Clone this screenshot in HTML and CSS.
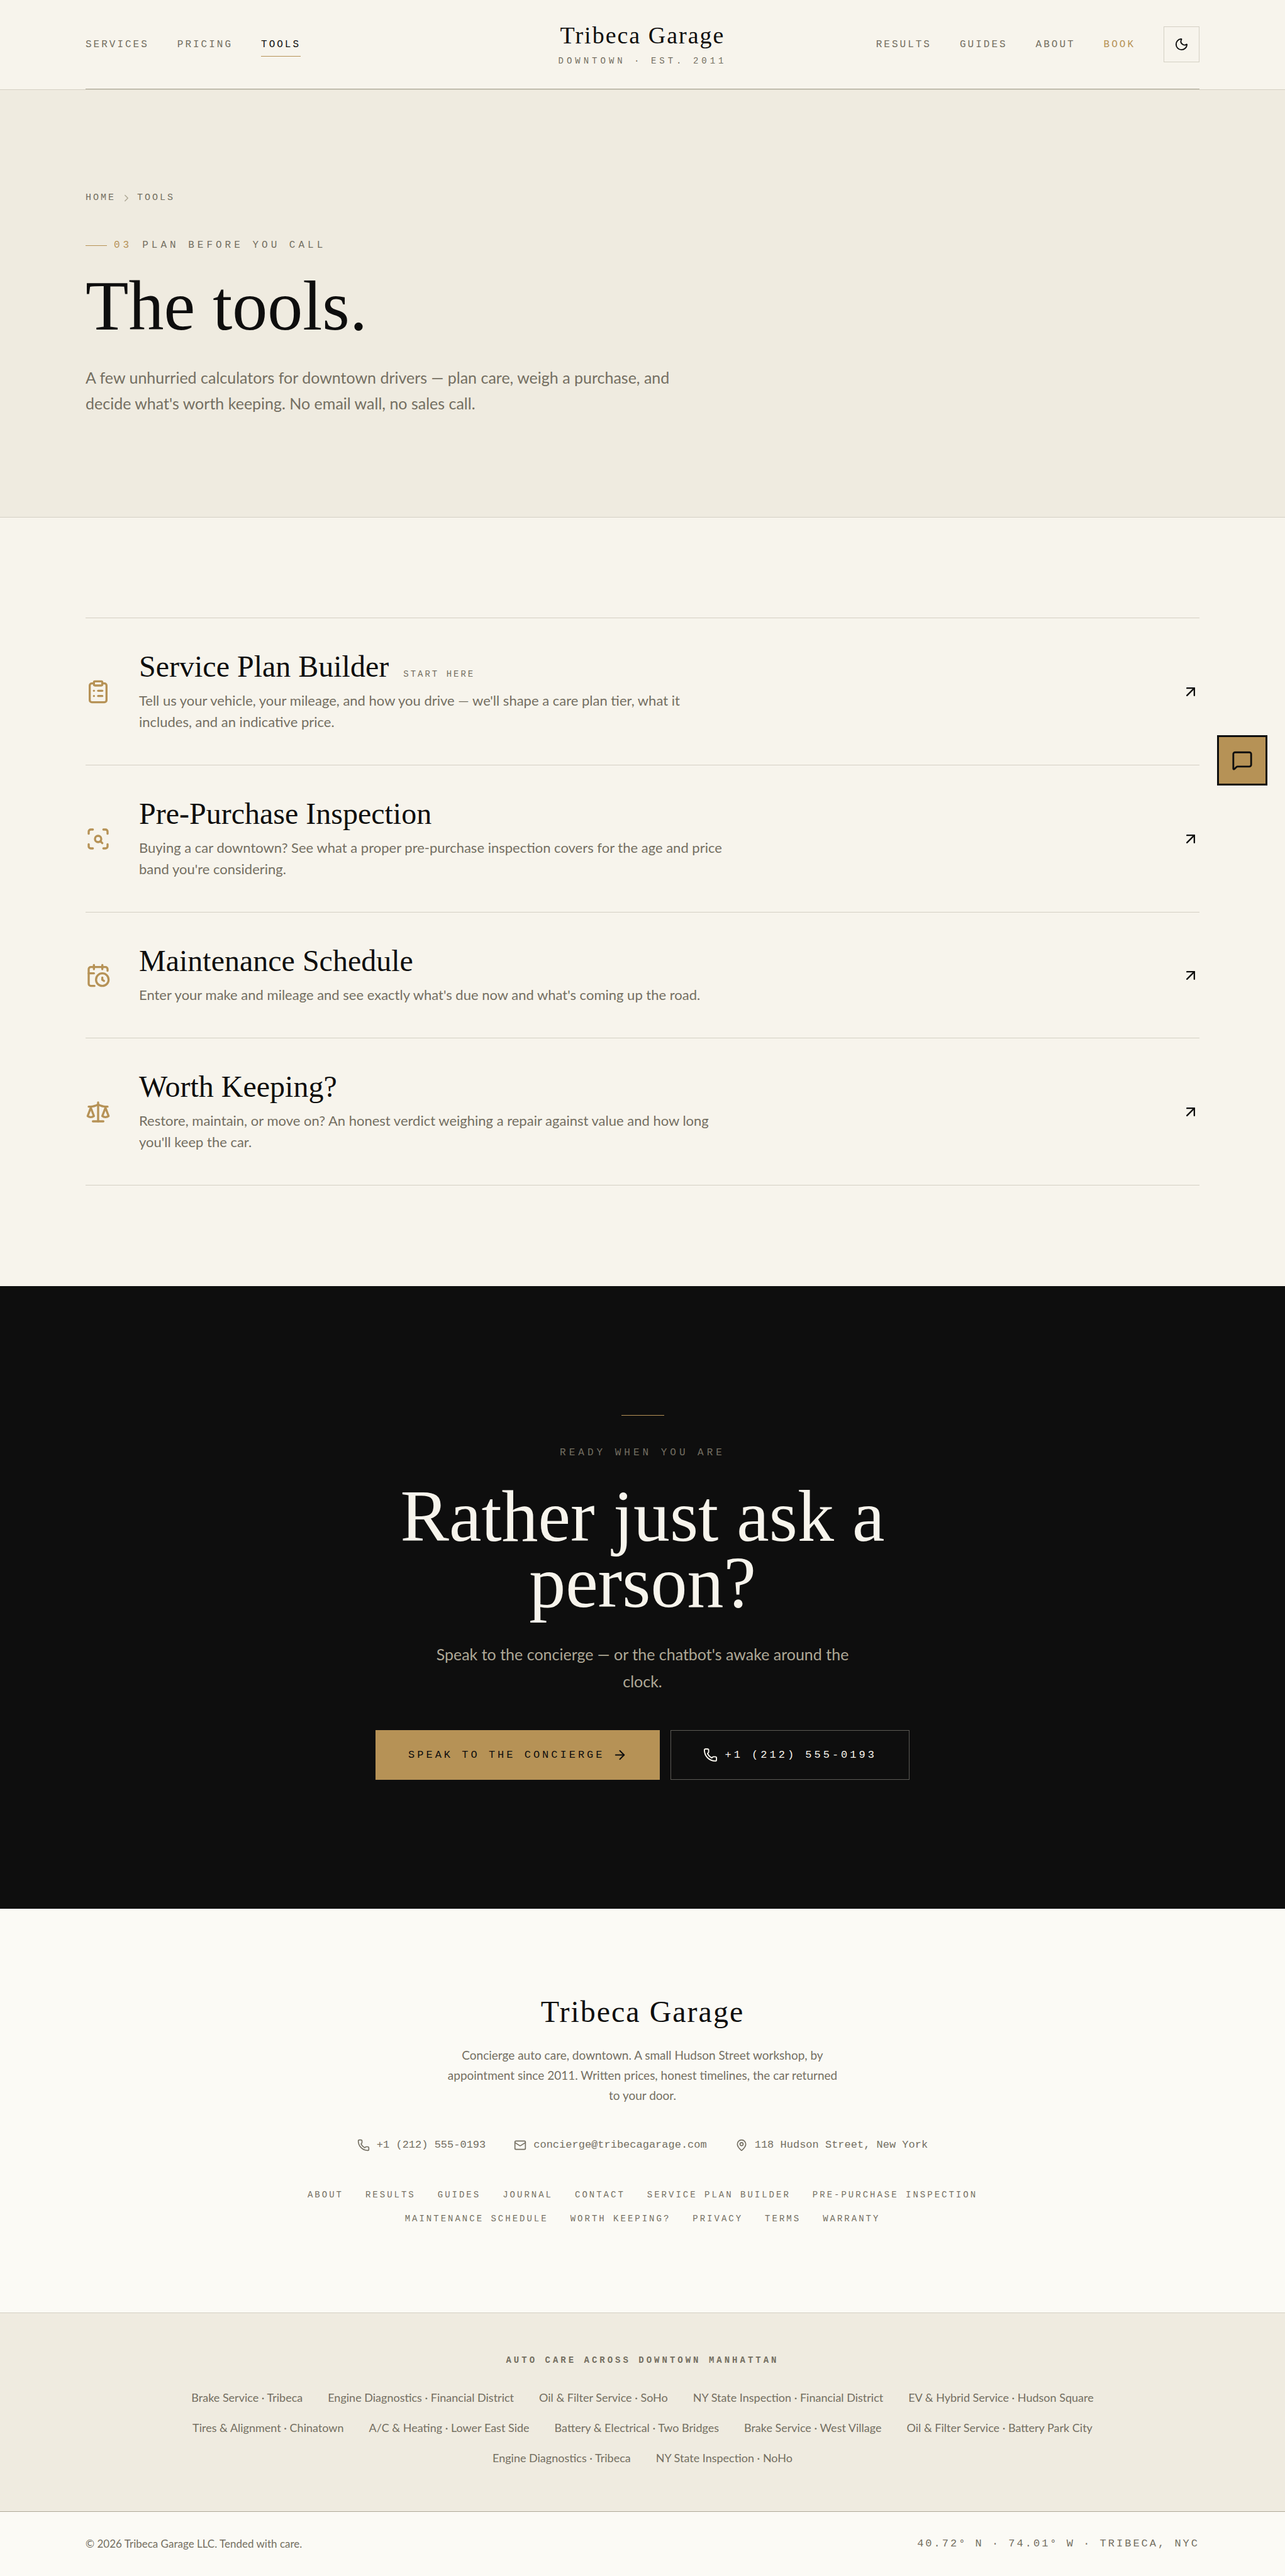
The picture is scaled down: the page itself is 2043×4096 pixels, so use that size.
FILE: index.html
```html
<!DOCTYPE html>
<html lang="en">
<head>
  <meta charset="UTF-8" />
  <meta name="viewport" content="width=device-width, initial-scale=1.0" />
  <title>Tools | Tribeca Garage</title>
  <link rel="stylesheet" href="styles.css">
</head>
<body>
  <header class="site-header">
    <div class="header-inner">
      <nav class="nav" aria-label="Main">
        <a href="#services">SERVICES</a>
        <a href="#pricing">PRICING</a>
        <a href="#tools" class="active">TOOLS</a>
      </nav>
      <a href="#home" class="logo">
        <span class="logo-name">Tribeca Garage</span>
        <span class="logo-tag">DOWNTOWN · EST. 2011</span>
      </a>
      <nav class="nav nav-right" aria-label="Secondary">
        <a href="#results">RESULTS</a>
        <a href="#guides">GUIDES</a>
        <a href="#about">ABOUT</a>
        <a href="#book" class="book">BOOK</a>
        <button type="button" class="theme-toggle" aria-label="Switch theme">
          <svg class="icon" viewBox="0 0 24 24"><path d="M20.985 12.486a9 9 0 1 1-9.473-9.472c.405-.022.617.46.402.803a6 6 0 0 0 8.268 8.268c.344-.215.825-.004.803.401"/></svg>
        </button>
      </nav>
    </div>
  </header>

  <main>
    <section class="hero">
      <nav class="breadcrumb" aria-label="Breadcrumb">
        <a href="#home">HOME</a>
        <svg class="icon" viewBox="0 0 24 24"><path d="m9 18 6-6-6-6"/></svg>
        <span>TOOLS</span>
      </nav>
      <p class="eyebrow">
        <span class="eyebrow-num">03</span>
        <span class="eyebrow-text">PLAN BEFORE YOU CALL</span>
      </p>
      <h1>The tools.</h1>
      <p class="lede">A few unhurried calculators for downtown drivers — plan care, weigh a purchase, and decide what's worth keeping. No email wall, no sales call.</p>
    </section>

    <section class="tools">
      <ul class="tool-list">
        <li>
          <a href="#plan" class="tool">
            <svg class="icon tool-icon" viewBox="0 0 24 24"><rect width="8" height="4" x="8" y="2" rx="1" ry="1"/><path d="M16 4h2a2 2 0 0 1 2 2v14a2 2 0 0 1-2 2H6a2 2 0 0 1-2-2V6a2 2 0 0 1 2-2h2"/><path d="M12 11h4"/><path d="M12 16h4"/><path d="M8 11h.01"/><path d="M8 16h.01"/></svg>
            <div class="tool-body">
              <h2>Service Plan Builder <span class="tool-tag">START HERE</span></h2>
              <p>Tell us your vehicle, your mileage, and how you drive — we'll shape a care plan tier, what it includes, and an indicative price.</p>
            </div>
            <svg class="icon tool-arrow" viewBox="0 0 24 24"><path d="M7 7h10v10"/><path d="M7 17 17 7"/></svg>
          </a>
        </li>
        <li>
          <a href="#inspection" class="tool">
            <svg class="icon tool-icon" viewBox="0 0 24 24"><path d="M3 7V5a2 2 0 0 1 2-2h2"/><path d="M17 3h2a2 2 0 0 1 2 2v2"/><path d="M21 17v2a2 2 0 0 1-2 2h-2"/><path d="M7 21H5a2 2 0 0 1-2-2v-2"/><circle cx="12" cy="12" r="3"/><path d="m16 16-1.9-1.9"/></svg>
            <div class="tool-body">
              <h2>Pre-Purchase Inspection</h2>
              <p>Buying a car downtown? See what a proper pre-purchase inspection covers for the age and price band you're considering.</p>
            </div>
            <svg class="icon tool-arrow" viewBox="0 0 24 24"><path d="M7 7h10v10"/><path d="M7 17 17 7"/></svg>
          </a>
        </li>
        <li>
          <a href="#schedule" class="tool">
            <svg class="icon tool-icon" viewBox="0 0 24 24"><path d="M16 14v2.2l1.6 1"/><path d="M16 2v4"/><path d="M21 7.5V6a2 2 0 0 0-2-2H5a2 2 0 0 0-2 2v14a2 2 0 0 0 2 2h3.5"/><path d="M3 10h5"/><path d="M8 2v4"/><circle cx="16" cy="16" r="6"/></svg>
            <div class="tool-body">
              <h2>Maintenance Schedule</h2>
              <p>Enter your make and mileage and see exactly what's due now and what's coming up the road.</p>
            </div>
            <svg class="icon tool-arrow" viewBox="0 0 24 24"><path d="M7 7h10v10"/><path d="M7 17 17 7"/></svg>
          </a>
        </li>
        <li>
          <a href="#worth" class="tool">
            <svg class="icon tool-icon" viewBox="0 0 24 24"><path d="m16 16 3-8 3 8c-.87.65-1.92 1-3 1s-2.13-.35-3-1Z"/><path d="m2 16 3-8 3 8c-.87.65-1.92 1-3 1s-2.13-.35-3-1Z"/><path d="M7 21h10"/><path d="M12 3v18"/><path d="M3 7h2c2 0 5-1 7-2 2 1 5 2 7 2h2"/></svg>
            <div class="tool-body">
              <h2>Worth Keeping?</h2>
              <p>Restore, maintain, or move on? An honest verdict weighing a repair against value and how long you'll keep the car.</p>
            </div>
            <svg class="icon tool-arrow" viewBox="0 0 24 24"><path d="M7 7h10v10"/><path d="M7 17 17 7"/></svg>
          </a>
        </li>
      </ul>
    </section>

    <section class="cta">
      <p class="cta-eyebrow">READY WHEN YOU ARE</p>
      <h2>Rather just ask a person?</h2>
      <p class="cta-text">Speak to the concierge — or the chatbot's awake around the clock.</p>
      <div class="cta-actions">
        <a href="#contact" class="btn btn-gold">SPEAK TO THE CONCIERGE
          <svg class="icon" viewBox="0 0 24 24"><path d="M5 12h14"/><path d="m12 5 7 7-7 7"/></svg>
        </a>
        <a href="tel:+12125550193" class="btn btn-outline">
          <svg class="icon" viewBox="0 0 24 24"><path d="M13.832 16.568a1 1 0 0 0 1.213-.303l.355-.465A2 2 0 0 1 17 15h3a2 2 0 0 1 2 2v3a2 2 0 0 1-2 2A18 18 0 0 1 2 4a2 2 0 0 1 2-2h3a2 2 0 0 1 2 2v3a2 2 0 0 1-.8 1.6l-.468.351a1 1 0 0 0-.292 1.233 14 14 0 0 0 6.392 6.384"/></svg>
          +1 (212) 555-0193</a>
      </div>
    </section>
  </main>

  <footer>
    <div class="footer-main">
      <p class="footer-logo">Tribeca Garage</p>
      <p class="footer-about">Concierge auto care, downtown. A small Hudson Street workshop, by appointment since 2011. Written prices, honest timelines, the car returned to your door.</p>
      <div class="footer-contact">
        <a href="tel:+12125550193">
          <svg class="icon" viewBox="0 0 24 24"><path d="M13.832 16.568a1 1 0 0 0 1.213-.303l.355-.465A2 2 0 0 1 17 15h3a2 2 0 0 1 2 2v3a2 2 0 0 1-2 2A18 18 0 0 1 2 4a2 2 0 0 1 2-2h3a2 2 0 0 1 2 2v3a2 2 0 0 1-.8 1.6l-.468.351a1 1 0 0 0-.292 1.233 14 14 0 0 0 6.392 6.384"/></svg>
          +1 (212) 555-0193</a>
        <a href="mailto:concierge@tribecagarage.com">
          <svg class="icon" viewBox="0 0 24 24"><path d="m22 7-8.991 5.727a2 2 0 0 1-2.009 0L2 7"/><rect x="2" y="4" width="20" height="16" rx="2"/></svg>
          concierge@tribecagarage.com</a>
        <span>
          <svg class="icon" viewBox="0 0 24 24"><path d="M20 10c0 4.993-5.539 10.193-7.399 11.799a1 1 0 0 1-1.202 0C9.539 20.193 4 14.993 4 10a8 8 0 0 1 16 0"/><circle cx="12" cy="10" r="3"/></svg>
          118 Hudson Street, New York</span>
      </div>
      <nav class="footer-links" aria-label="Footer">
        <a href="#about">ABOUT</a>
        <a href="#results">RESULTS</a>
        <a href="#guides">GUIDES</a>
        <a href="#journal">JOURNAL</a>
        <a href="#contact">CONTACT</a>
        <a href="#plan">SERVICE PLAN BUILDER</a>
        <a href="#inspection">PRE-PURCHASE INSPECTION</a>
        <a href="#schedule">MAINTENANCE SCHEDULE</a>
        <a href="#worth">WORTH KEEPING?</a>
        <a href="#privacy">PRIVACY</a>
        <a href="#terms">TERMS</a>
        <a href="#warranty">WARRANTY</a>
      </nav>
    </div>

    <div class="areas">
      <h2>AUTO CARE ACROSS DOWNTOWN MANHATTAN</h2>
      <div class="area-links">
        <a href="#a1">Brake Service · Tribeca</a>
        <a href="#a2">Engine Diagnostics · Financial District</a>
        <a href="#a3">Oil &amp; Filter Service · SoHo</a>
        <a href="#a4">NY State Inspection · Financial District</a>
        <a href="#a5">EV &amp; Hybrid Service · Hudson Square</a>
        <a href="#a6">Tires &amp; Alignment · Chinatown</a>
        <a href="#a7">A/C &amp; Heating · Lower East Side</a>
        <a href="#a8">Battery &amp; Electrical · Two Bridges</a>
        <a href="#a9">Brake Service · West Village</a>
        <a href="#a10">Oil &amp; Filter Service · Battery Park City</a>
        <a href="#a11">Engine Diagnostics · Tribeca</a>
        <a href="#a12">NY State Inspection · NoHo</a>
      </div>
    </div>

    <div class="footer-bottom">
      <p>© 2026 Tribeca Garage LLC. Tended with care.</p>
      <p class="coords">40.72° N · 74.01° W · TRIBECA, NYC</p>
    </div>
  </footer>

  <button type="button" class="chat-btn" aria-label="Open chat">
    <svg class="icon" viewBox="0 0 24 24"><path d="M22 17a2 2 0 0 1-2 2H6.828a2 2 0 0 0-1.414.586l-2.202 2.202A.71.71 0 0 1 2 21.286V5a2 2 0 0 1 2-2h16a2 2 0 0 1 2 2z"/></svg>
  </button>
</body>
</html>
```
FILE: styles.css
```css
:root {
  --bg: #f7f4ec;
  --cream: #efebe0;
  --paper: #fbfaf5;
  --ink: #0e0e0e;
  --muted: #746f62;
  --soft: #aea896;
  --line: #d4d0c4;
  --gold: #b69256;
  --serif: "Liberation Serif", serif;
  --sans: Lato, sans-serif;
  --mono: "Liberation Mono", monospace;
}

* {
  box-sizing: border-box;
  margin: 0;
  padding: 0;
}

body {
  position: relative;
  background-color: var(--bg);
  color: var(--ink);
  font-family: var(--sans);
}

a {
  color: inherit;
  text-decoration: none;
}

h1,
h2 {
  font-family: var(--serif);
  font-weight: 400;
}

.icon {
  flex: none;
  fill: none;
  stroke: currentColor;
  stroke-width: 2;
  stroke-linecap: round;
  stroke-linejoin: round;
}

/* Header */
.site-header {
  padding: 0 136px;
  border-bottom: 1px solid var(--line);
}

.header-inner {
  display: grid;
  grid-template-columns: 1fr auto 1fr;
  align-items: center;
  min-height: 142px;
  border-bottom: 1px solid var(--soft);
}

.nav {
  display: flex;
  align-items: center;
  gap: 45px;
  font-family: var(--mono);
  font-size: 16px;
  letter-spacing: 3px;
  color: var(--muted);
}

.nav-right {
  justify-content: flex-end;
}

.nav a {
  padding: 11px 0 9px;
  border-bottom: 1px solid transparent;
}

.nav .active {
  color: var(--ink);
  border-color: var(--gold);
}

.nav .book {
  color: var(--gold);
}

.logo {
  display: flex;
  flex-direction: column;
  align-items: center;
  gap: 9px;
}

.logo-name {
  font-family: var(--serif);
  font-size: 38px;
  line-height: 44px;
  letter-spacing: 2px;
}

.logo-tag {
  font-family: var(--mono);
  font-size: 14px;
  line-height: 20px;
  letter-spacing: 5px;
  color: var(--muted);
}

.theme-toggle {
  display: flex;
  align-items: center;
  justify-content: center;
  width: 57px;
  height: 57px;
  background: none;
  border: 1px solid var(--line);
  color: var(--ink);
  cursor: pointer;
}

.theme-toggle .icon {
  width: 23px;
  height: 23px;
}

/* Hero */
.hero {
  padding: 160px 136px;
  background-color: var(--cream);
  border-bottom: 1px solid var(--line);
}

.breadcrumb {
  display: flex;
  align-items: center;
  gap: 8px;
  font-family: var(--mono);
  font-size: 15px;
  line-height: 24px;
  letter-spacing: 3px;
  color: var(--muted);
}

.breadcrumb .icon {
  width: 18px;
  height: 18px;
  color: var(--soft);
}

.eyebrow {
  display: flex;
  align-items: center;
  gap: 11px;
  margin-top: 51px;
  font-family: var(--mono);
  font-size: 16px;
  line-height: 24px;
  letter-spacing: 5px;
  color: var(--muted);
}

.eyebrow::before {
  content: "";
  width: 34px;
  height: 1px;
  background-color: var(--gold);
}

.eyebrow-num {
  color: var(--gold);
}

.eyebrow-text {
  padding-left: 5px;
}

.hero h1 {
  margin-top: 28px;
  font-size: 112px;
  line-height: 112px;
}

.lede {
  max-width: 965px;
  margin-top: 38px;
  font-size: 25px;
  line-height: 41px;
  color: var(--muted);
}

/* Tool list */
.tools {
  padding: 159px 136px 160px;
}

.tool-list {
  list-style: none;
  border-top: 1px solid var(--line);
}

.tool {
  display: flex;
  align-items: center;
  gap: 45px;
  padding: 51px 0;
  border-bottom: 1px solid var(--line);
}

.tool-icon {
  width: 40px;
  height: 40px;
  color: var(--gold);
}

.tool-body {
  flex: 1;
}

.tool h2 {
  font-size: 48px;
  line-height: 51px;
}

.tool-tag {
  margin-left: 11px;
  font-family: var(--mono);
  font-size: 14px;
  letter-spacing: 3px;
  line-height: 20px;
  color: var(--muted);
}

.tool p {
  max-width: 940px;
  margin-top: 12px;
  font-size: 22px;
  line-height: 34px;
  color: var(--muted);
}

.tool-arrow {
  width: 28px;
  height: 28px;
}

/* Call to action */
.cta {
  display: flex;
  flex-direction: column;
  align-items: center;
  padding: 205px 136px;
  background-color: var(--ink);
  color: var(--bg);
  text-align: center;
}

.cta::before {
  content: "";
  width: 68px;
  height: 1px;
  background-color: var(--gold);
}

.cta-eyebrow {
  margin-top: 47px;
  font-family: var(--mono);
  font-size: 16px;
  line-height: 24px;
  letter-spacing: 5px;
  color: var(--muted);
}

.cta h2 {
  max-width: 900px;
  margin-top: 37px;
  font-size: 116px;
  line-height: 105px;
}

.cta-text {
  max-width: 680px;
  margin-top: 40px;
  font-size: 25px;
  line-height: 43px;
  color: var(--soft);
}

.cta-actions {
  display: flex;
  flex-wrap: wrap;
  justify-content: center;
  gap: 17px;
  margin-top: 56px;
}

.btn {
  display: flex;
  align-items: center;
  gap: 12px;
  min-height: 79px;
  padding: 0 51px;
  border: 1px solid var(--gold);
  font-family: var(--mono);
  font-size: 17px;
  letter-spacing: 4px;
}

.btn .icon {
  width: 23px;
  height: 23px;
}

.btn-gold {
  background-color: var(--gold);
  color: var(--ink);
}

.btn-outline {
  border-color: #5c5a55;
}

/* Footer */
.footer-main {
  display: flex;
  flex-direction: column;
  align-items: center;
  padding: 136px 136px 138px;
  background-color: var(--paper);
  color: var(--muted);
}

.footer-logo {
  font-family: var(--serif);
  font-size: 48px;
  line-height: 56px;
  letter-spacing: 2px;
  color: var(--ink);
}

.footer-about {
  max-width: 640px;
  margin-top: 25px;
  font-size: 19px;
  line-height: 32px;
  text-align: center;
}

.footer-contact {
  display: flex;
  flex-wrap: wrap;
  justify-content: center;
  gap: 20px 45px;
  margin-top: 51px;
  font-family: var(--mono);
  font-size: 17px;
  line-height: 24px;
}

.footer-contact a,
.footer-contact span {
  display: flex;
  align-items: center;
  gap: 11px;
}

.footer-contact .icon {
  width: 20px;
  height: 20px;
}

.footer-links {
  display: flex;
  flex-wrap: wrap;
  justify-content: center;
  gap: 16px 35px;
  max-width: 1150px;
  margin-top: 56px;
  font-family: var(--mono);
  font-size: 14px;
  line-height: 22px;
  letter-spacing: 3px;
}

.areas {
  padding: 63px 136px 71px;
  background-color: var(--cream);
  border-top: 1px solid var(--line);
  color: var(--muted);
}

.areas h2 {
  font-family: var(--mono);
  font-size: 14px;
  font-weight: 700;
  line-height: 24px;
  letter-spacing: 4px;
  text-align: center;
}

.area-links {
  display: flex;
  flex-wrap: wrap;
  justify-content: center;
  gap: 20px 40px;
  max-width: 1500px;
  margin: 33px auto 0;
  font-size: 18px;
  line-height: 28px;
}

.footer-bottom {
  display: flex;
  align-items: center;
  justify-content: space-between;
  padding: 39px 136px;
  background-color: var(--paper);
  border-top: 1px solid var(--soft);
  color: var(--muted);
  font-size: 17px;
  line-height: 24px;
}

.coords {
  font-family: var(--mono);
  letter-spacing: 3px;
}

/* Chat launcher */
.chat-btn {
  position: absolute;
  top: 1169px;
  right: 28px;
  display: flex;
  align-items: center;
  justify-content: center;
  width: 80px;
  height: 80px;
  background-color: var(--gold);
  border: 3px solid var(--ink);
  color: var(--ink);
  cursor: pointer;
}

.chat-btn .icon {
  width: 34px;
  height: 34px;
}
```
